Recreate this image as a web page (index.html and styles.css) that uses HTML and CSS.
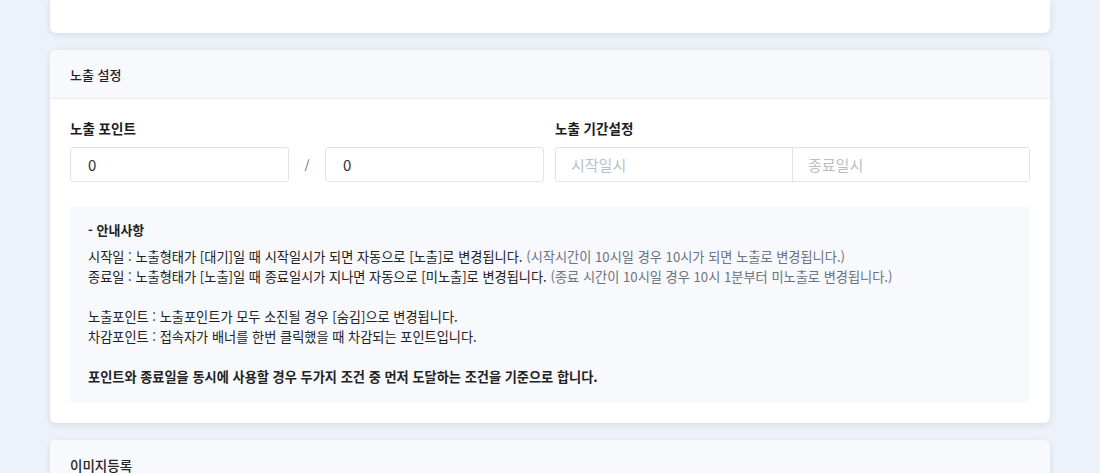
FILE: index.html
```html
<!DOCTYPE html>
<html lang="ko">
<head>
<meta charset="utf-8">
<link rel="stylesheet" href="styles.css">
</head>
<body>
<div class="page">
  <div class="card card-top"></div>

  <div class="card">
    <div class="card-header">노출 설정</div>
    <div class="card-body">
      <div class="row">
        <div class="col">
          <div class="label">노출 포인트</div>
          <div class="points">
            <input class="input" type="text" value="0">
            <span class="slash">/</span>
            <input class="input" type="text" value="0">
          </div>
        </div>
        <div class="col">
          <div class="label">노출 기간설정</div>
          <div class="range">
            <input class="range-input" type="text" placeholder="시작일시">
            <input class="range-input" type="text" placeholder="종료일시">
          </div>
        </div>
      </div>

      <div class="notice">
        <div class="notice-title">- 안내사항</div>
        <p class="line">시작일 : 노출형태가 [대기]일 때 시작일시가 되면 자동으로 [노출]로 변경됩니다. <span class="muted">(시작시간이 10시일 경우 10시가 되면 노출로 변경됩니다.)</span></p>
        <p class="line">종료일 : 노출형태가 [노출]일 때 종료일시가 지나면 자동으로 [미노출]로 변경됩니다. <span class="muted">(종료 시간이 10시일 경우 10시 1분부터 미노출로 변경됩니다.)</span></p>
        <p class="line blank"></p>
        <p class="line">노출포인트 : 노출포인트가 모두 소진될 경우 [숨김]으로 변경됩니다.</p>
        <p class="line">차감포인트 : 접속자가 배너를 한번 클릭했을 때 차감되는 포인트입니다.</p>
        <p class="line blank"></p>
        <p class="line strong">포인트와 종료일을 동시에 사용할 경우 두가지 조건 중 먼저 도달하는 조건을 기준으로 합니다.</p>
      </div>
    </div>
  </div>

  <div class="card">
    <div class="card-header plain">이미지등록</div>
  </div>
</div>
</body>
</html>
```

FILE: styles.css
```css
* { box-sizing: border-box; }

html, body {
  margin: 0;
  padding: 0;
  background: #edf1f9;
  font-family: "Noto Sans CJK KR", "Noto Sans", "Liberation Sans", sans-serif;
  color: #222;
  overflow: hidden;
}

.page {
  width: 1000px;
  margin: 0 auto;
  display: flex;
  flex-direction: column;
  gap: 17px;
}

.card {
  background: #fff;
  border-radius: 6px;
  box-shadow: 0 2px 6px rgba(60, 70, 100, 0.12);
  overflow: hidden;
}

.card-top {
  height: 33px;
  border-radius: 0 0 6px 6px;
}

.card-header {
  height: 49px;
  padding: 0 20px;
  display: flex;
  align-items: center;
  background: #f8f9fc;
  border-bottom: 1px solid #e9ecf1;
  font-size: 13px;
  font-weight: 500;
  color: #222;
}

.card-header.plain {
  border-bottom: none;
  font-size: 13.5px;
}

.card-body {
  padding: 20px 20px 20px;
}

.row {
  display: grid;
  grid-template-columns: 1fr 1fr;
  gap: 10px;
}

.label {
  font-size: 13.5px;
  font-weight: 700;
  line-height: 18px;
  margin-bottom: 10px;
  color: #1c1c1c;
}

.points {
  display: flex;
  align-items: center;
}

.input {
  width: 219px;
  height: 35px;
  border: 1px solid #dfe3ea;
  border-radius: 3px;
  padding: 0 17px;
  font-family: inherit;
  font-size: 15px;
  color: #333;
  background: #fff;
  outline: none;
}

.slash {
  width: 36px;
  text-align: center;
  font-size: 12px;
  color: #555;
}

.range {
  display: flex;
  height: 35px;
  border: 1px solid #dfe3ea;
  border-radius: 3px;
  overflow: hidden;
}

.range-input {
  flex: 1;
  min-width: 0;
  border: none;
  padding: 0 15px;
  font-family: inherit;
  font-size: 15px;
  background: #fff;
  outline: none;
}

.range-input + .range-input {
  border-left: 1px solid #dfe3ea;
}

.range-input::placeholder {
  color: #b9bec7;
}

.notice {
  margin-top: 25px;
  background: #f8f9fc;
  padding: 14px 18px 16px;
  font-size: 13.2px;
  line-height: 20px;
}

.notice-title {
  font-weight: 700;
  font-size: 13px;
  line-height: 18px;
  margin-bottom: 8px;
  color: #222;
}

.line {
  margin: 0;
  min-height: 20px;
  color: #222;
  white-space: nowrap;
}

.muted {
  color: #6b7280;
}

.strong {
  font-weight: 700;
}
```
